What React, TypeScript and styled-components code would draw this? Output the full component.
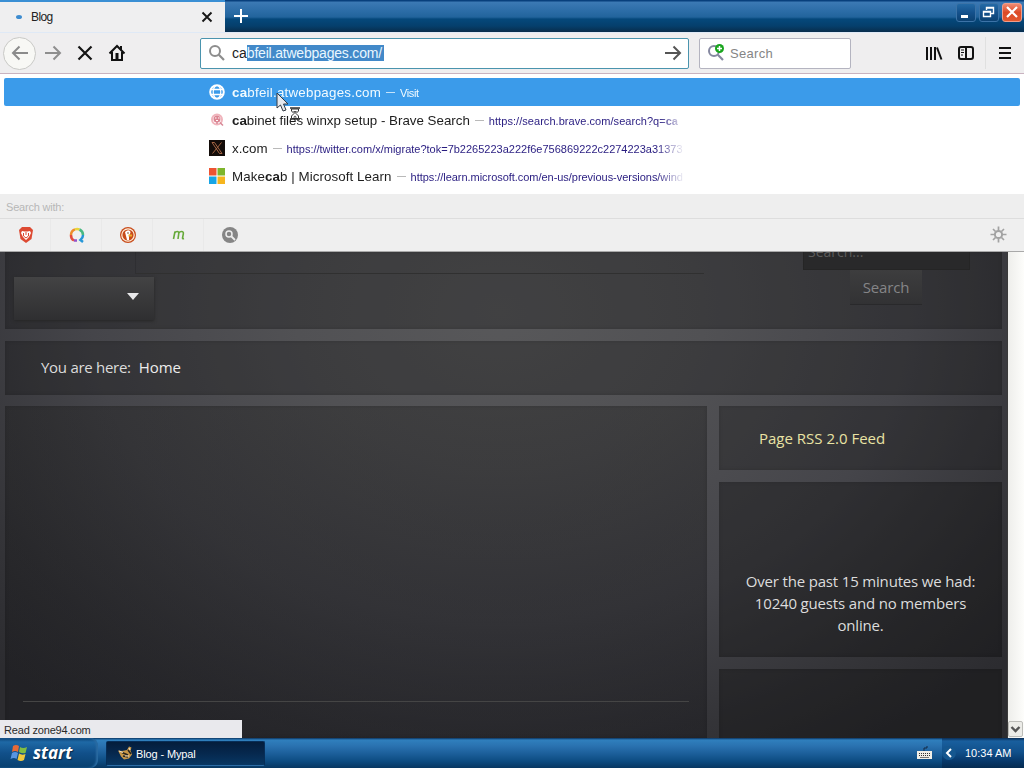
import React from "react";
import styled, { createGlobalStyle } from "styled-components";

const GlobalStyle = createGlobalStyle`
  * {
    box-sizing: border-box;
  }

  body {
    margin: 0;
    overflow: hidden;
    font-family: "Liberation Sans", Arial, sans-serif;
  }
`;

const Screen = styled.div`
  position: relative;
  width: 1024px;
  height: 768px;
  display: flex;
  flex-direction: column;
  overflow: hidden;
  background: #2b2b2c;
`;

const Label = styled.span<{ size?: number; spacing?: number; color?: string }>`
  font-size: ${p => p.size || 13}px;
  letter-spacing: ${p => p.spacing || 0}px;
  color: ${p => p.color || "inherit"};
  white-space: pre;
`;

/* window frame */

const TitleBar = styled.div`
  height: 32px;
  flex: none;
  display: flex;
  background: linear-gradient(
    #083f7c 0,
    #083f7c 1px,
    #3c79b4 2px,
    #2a6ba5 12px,
    #22649c 17px,
    #05487b 19px,
    #053f6c 26px,
    #082d4c 32px
  );
`;

const Tab = styled.div`
  width: 225px;
  height: 32px;
  display: flex;
  align-items: center;
  padding: 0 10px 0 16px;
  background: #efeff0;
  border-top: 2px solid #3a8fd4;
`;

const LoadingDot = styled.div`
  width: 6px;
  height: 4px;
  margin-right: 9px;
  border-radius: 50%;
  background: #3d8cd0;
`;

const TabTitle = styled(Label)`
  flex: 1;
`;

const NewTab = styled.div`
  flex: 1;
  padding: 8px 0 0 8px;
`;

const WindowButtons = styled.div`
  display: flex;
  gap: 3px;
  padding: 3px 2px 0 0;
`;

const WindowButton = styled.div<{ danger?: boolean }>`
  width: 20px;
  height: 19px;
  border-radius: 3px;
  border: 1px solid ${p => (p.danger ? "#ef9d8a" : "#3c73a7")};
  background: ${p =>
    p.danger
      ? "linear-gradient(#f08a72, #dc4a26 50%, #e2582f)"
      : "linear-gradient(#246aa6, #14518c 50%, #0c4273)"};

  svg {
    display: block;
  }
`;

const NavBar = styled.div`
  height: 42px;
  flex: none;
  display: flex;
  align-items: center;
  background: #efeeef;
  border-top: 1px solid #dfe9f6;
  border-bottom: 1px solid #c9b3c0;
`;

const BackButton = styled.div`
  width: 33px;
  height: 33px;
  margin-left: 3px;
  border-radius: 50%;
  border: 1px solid #c9c9c6;
  background: #f8f8f5;
  display: flex;
  align-items: center;
  justify-content: center;
`;

const NavIcons = styled.div`
  display: flex;
  gap: 14px;
  margin-left: 8px;
  flex: 1;
`;

const Field = styled.div<{ width: number; focused?: boolean }>`
  width: ${p => p.width}px;
  height: 31px;
  display: flex;
  align-items: center;
  padding: 0 6px 0 7px;
  background: #fff;
  border: 1px solid ${p => (p.focused ? "#4a94ae" : "#b4b4c0")};
  border-radius: 2px;
`;

const Address = styled.div`
  flex: 1;
  padding-left: 6px;
  font-size: 14px;
  line-height: 16px;
  color: #222;
  white-space: nowrap;
`;

const Selection = styled.span`
  display: inline-block;
  width: 137px;
  letter-spacing: -0.2px;
  background: #4289c9;
  color: #e9f7ff;
`;

const SearchField = styled(Field)`
  margin-left: 10px;
  gap: 5px;
`;

const Tools = styled.div`
  display: flex;
  align-items: center;
  gap: 14px;
  margin-left: 74px;
  padding-right: 10px;
`;

const ToolSeparator = styled.div`
  width: 1px;
  height: 32px;
  margin: 0 -4px;
  background: #e0e0e0;
`;

/* address suggestions */

const Suggestions = styled.div`
  height: 120px;
  flex: none;
  padding: 4px 4px 0;
  background: #fff;
`;

const SuggestionRow = styled.div<{ active?: boolean }>`
  height: 28px;
  display: flex;
  align-items: center;
  padding-left: 205px;
  border-radius: 2px;
  color: ${p => (p.active ? "#f2fbff" : "#1d1d1d")};
  background: ${p => (p.active ? "#3b9bea" : "transparent")};
`;

const SuggestionText = styled.div`
  width: 455px;
  margin-left: 7px;
  overflow: hidden;
  white-space: nowrap;
  mask-image: linear-gradient(to right, #000 425px, transparent 453px);
`;

const Dash = styled.span<{ active?: boolean }>`
  display: inline-block;
  width: 9px;
  height: 1px;
  margin: 0 5px;
  vertical-align: 4px;
  background: ${p => (p.active ? "#c5e3fa" : "#b9b9b9")};
`;

const SearchWith = styled.div`
  height: 25px;
  flex: none;
  padding: 5px 6px;
  line-height: 14px;
  background: #eeeeee;
  border-bottom: 1px solid #dddddd;
`;

const Engines = styled.div`
  height: 33px;
  flex: none;
  display: flex;
  background: #efefef;
  border-bottom: 1px solid #a9a9a9;
`;

const Engine = styled.div`
  width: 51px;
  display: flex;
  align-items: center;
  justify-content: center;
  padding-left: 2px;
  border-right: 1px solid #e9e9e9;

  &:nth-child(5) {
    padding-left: 1px;
    border-right: none;
  }
`;

const EngineSettings = styled.div`
  margin-left: auto;
  padding: 7px 17px 0 0;
`;

/* page */

const Viewport = styled.div`
  position: relative;
  height: 486px;
  flex: none;
  display: flex;
`;

const Page = styled.div`
  width: 1008px;
  height: 486px;
  padding: 0 5px;
  overflow: hidden;
  font-family: "Open Sans", "Noto Sans", sans-serif;
  font-size: 15px;
  color: #dcdcdc;
  border-right: 1px solid #3a3a3a;
  background: radial-gradient(
    ellipse 680px 520px at 500px 60px,
    #58585a 0%,
    #515154 30%,
    #45454a 60%,
    #343438 85%,
    #2c2c30 100%
  );
`;

const Panel = styled.div<{ height: number }>`
  height: ${p => p.height}px;
  flex: none;
  background: rgba(14, 14, 12, 0.3);
  box-shadow: inset 0 0 4px rgba(0, 0, 0, 0.14);
`;

const Header = styled(Panel)`
  display: flex;
  justify-content: space-between;
`;

const HeaderLeft = styled.div`
  width: 699px;
`;

const HeaderStrip = styled.div`
  height: 22px;
  margin-left: 130px;
  border-bottom: 1px solid #303030;
  border-left: 1px solid rgba(0, 0, 0, 0.12);
`;

const MenuBox = styled.div`
  width: 140px;
  height: 43px;
  margin: 3px 0 0 9px;
  padding: 16px 15px 0 0;
  background: linear-gradient(#434344, #2f2f31);
  box-shadow: 0 1px 3px #262626;

  svg {
    display: block;
    margin-left: auto;
  }
`;

const HeaderSearch = styled.div`
  width: 199px;
`;

const SearchInput = styled.div`
  width: 167px;
  height: 18px;
  padding-left: 4px;
  overflow: hidden;
  font-size: 14px;
  line-height: 0;
  color: #5c5c5c;
  background: #29292a;
  border: 1px solid #252525;
  border-top: none;
`;

const SearchButton = styled.div`
  width: 72px;
  height: 35px;
  margin-left: 47px;
  line-height: 34px;
  text-align: center;
  letter-spacing: -0.15px;
  color: #858587;
  background: linear-gradient(#3d3d3e, #323234);
  border-bottom: 1px solid #29292b;
`;

const Breadcrumb = styled(Panel)`
  display: flex;
  align-items: center;
  gap: 8px;
  margin: 12px 0 11px;
  padding: 0 0 2px 36px;
  letter-spacing: -0.28px;
`;

const Home = styled.span`
  color: #ececec;
  letter-spacing: -0.1px;
`;

const Columns = styled.div`
  display: flex;
  gap: 12px;
`;

const Main = styled(Panel)`
  width: 702px;
  padding: 295px 18px 0;
  background: linear-gradient(rgba(14, 14, 12, 0.3), rgba(20, 20, 24, 0.42));
`;

const Rule = styled.div`
  height: 1px;
  background: #454545;
`;

const Side = styled.div`
  width: 283px;
  display: flex;
  flex-direction: column;
  gap: 12px;
`;

const Feed = styled(Panel)`
  padding-left: 40px;
  line-height: 64px;
  color: #e9e3a4;
`;

const Visitors = styled(Panel)`
  padding: 88px 20px 0;
  text-align: center;
  line-height: 22px;
  letter-spacing: -0.17px;
  background: rgba(14, 14, 14, 0.38);
`;

const ScrollBar = styled.div`
  width: 16px;
  display: flex;
  align-items: flex-end;
  background: linear-gradient(to right, #eeeeeb, #fdfdfb);
`;

const ScrollButton = styled.div`
  width: 15px;
  height: 16px;
  margin: 0 0 1px 0;
  border: 1px solid #bcbcb8;
  border-radius: 2px;
  background: #ecece8;

  svg {
    display: block;
  }
`;

const StatusTip = styled.div`
  position: absolute;
  left: 0;
  bottom: 0;
  width: 242px;
  height: 18px;
  padding-left: 4px;
  line-height: 17px;
  background: #e9e9ed;
  color: #2a2a2a;
`;

const Pointer = styled.svg`
  position: absolute;
  left: 276px;
  top: 92px;
`;

/* taskbar */

const Taskbar = styled.div`
  height: 30px;
  flex: none;
  display: flex;
  color: #fff;
  background: linear-gradient(
    #0a3460 0,
    #2f7fbd 2px,
    #2a72b0 8px,
    #1d609c 15px,
    #0d4c82 23px,
    #073762 30px
  );
`;

const StartButton = styled.div`
  width: 98px;
  display: flex;
  align-items: center;
  gap: 4px;
  padding-left: 10px;
  border-radius: 0 8px 8px 0;
  background: linear-gradient(#0d4274, #1e69a6 4px, #11508a 15px, #08406f 30px);
  box-shadow: inset -2px 0 2px #2a6ba2;
`;

const StartText = styled.span`
  font-family: "Open Sans", sans-serif;
  font-size: 17px;
  font-weight: 700;
  font-style: italic;
  line-height: 20px;
  text-shadow: 1px 1px 1px #04294b;
`;

const TaskButton = styled.div`
  width: 159px;
  height: 25px;
  margin: 3px 0 0 8px;
  padding-left: 11px;
  display: flex;
  align-items: center;
  gap: 3px;
  border: 1px solid #072e58;
  border-bottom-color: #2d6da6;
  border-radius: 2px;
  background: linear-gradient(#041d3c, #06284e 50%, #083763);
`;

const TrayIcon = styled.div`
  margin: 7px 10px 0 auto;
`;

const Tray = styled.div`
  width: 82px;
  display: flex;
  align-items: center;
  gap: 9px;
  background: linear-gradient(
    #0a2d56 0,
    #195f9e 3px,
    #11508b 14px,
    #07386a 23px,
    #052b50 30px
  );
`;

function Magnifier({ plus }: { plus?: boolean }) {
  return (
    <svg width="18" height="18" viewBox="0 0 18 18" fill="none">
      <circle cx="7" cy="7" r="5" stroke={plus ? "#8588a0" : "#8d8d8d"} strokeWidth="2" />
      <path d="M10.8 10.8L16 16" stroke={plus ? "#8588a0" : "#8d8d8d"} strokeWidth="2.2" />
      {plus && (
        <>
          <circle cx="12.5" cy="4.500" r="4.500" fill="#19a51d" />
          <path d="M12.5 2v5M10 4.500h5" stroke="#fff" strokeWidth="1.500" />
        </>
      )}
    </svg>
  );
}

function Arrow({ color, flip }: { color: string; flip?: boolean }) {
  return (
    <svg width="18" height="18" viewBox="0 0 18 18" fill="none">
      <path
        d={flip ? "M17 9H2M8.500 2.500L2 9l6.500 6.500" : "M1 9h15M9.500 2.500L16 9l-6.500 6.500"}
        stroke={color}
        strokeWidth="2"
      />
    </svg>
  );
}

function Chrome() {
  return (
    <>
      <TitleBar>
        <Tab>
          <LoadingDot />
          <TabTitle size={12} spacing={-0.6} color="#222">
            Blog
          </TabTitle>
          <svg width="16" height="14" viewBox="0 0 16 14">
            <path d="M3.500 2.500l9 9M12.500 2.500l-9 9" stroke="#171717" strokeWidth="1.900" />
          </svg>
        </Tab>
        <NewTab>
          <svg width="16" height="16" viewBox="0 0 16 16">
            <path d="M8 1v14M1 8h14" stroke="#fff" strokeWidth="2" />
          </svg>
        </NewTab>
        <WindowButtons>
          <WindowButton>
            <svg width="18" height="17">
              <path d="M4 12.500h7" stroke="#fff" strokeWidth="3" />
            </svg>
          </WindowButton>
          <WindowButton>
            <svg width="18" height="17" fill="none" stroke="#fff">
              <path d="M6.500 6V3.500h7v6H11M6 4h8" strokeWidth="1.400" />
              <path d="M3.500 7.500h7v5h-7zM3 8h8" strokeWidth="1.400" />
            </svg>
          </WindowButton>
          <WindowButton danger>
            <svg width="18" height="17">
              <path d="M4 3l10 10M14 3L4 13" stroke="#fff" strokeWidth="2.200" />
            </svg>
          </WindowButton>
        </WindowButtons>
      </TitleBar>
      <NavBar>
        <BackButton>
          <Arrow color="#8b8b8b" flip />
        </BackButton>
        <NavIcons>
          <Arrow color="#8e8e8e" />
          <svg width="18" height="18" viewBox="0 0 18 18">
            <path d="M2.500 2.500l13 13M15.500 2.500l-13 13" stroke="#151515" strokeWidth="2.200" />
          </svg>
          <svg width="18" height="18" viewBox="0 0 18 18" fill="none" stroke="#111">
            <path d="M1.500 9.500L9 2l7.500 7.500" strokeWidth="2" />
            <path d="M4 8v8h10V8M13 2v4" strokeWidth="2" />
            <path d="M9 9v6" strokeWidth="3" />
          </svg>
        </NavIcons>
        <Field width={489} focused>
          <Magnifier />
          <Address>
            ca<Selection>bfeil.atwebpages.com/</Selection>
          </Address>
          <Arrow color="#555" />
        </Field>
        <SearchField width={152}>
          <Magnifier plus />
          <Label size={13} spacing={0.3} color="#858585">
            Search
          </Label>
        </SearchField>
        <Tools>
          <svg width="18" height="18" viewBox="0 0 18 18" stroke="#111">
            <path d="M2 3v13M6 3v13M10 3v13" strokeWidth="2" />
            <path d="M12 3.500l4.500 12" strokeWidth="2" />
          </svg>
          <svg width="18" height="18" viewBox="0 0 18 18" fill="none" stroke="#111">
            <rect x="2" y="3" width="14" height="12" rx="2" strokeWidth="2" />
            <path d="M9 3v12" strokeWidth="2" />
            <path d="M4 6h3M4 8.500h3M4 11h2" strokeWidth="1" />
          </svg>
          <ToolSeparator />
          <svg width="18" height="18" viewBox="0 0 18 18" stroke="#111">
            <path d="M3 4h12M3 9h12M3 14h12" strokeWidth="2" />
          </svg>
        </Tools>
      </NavBar>
    </>
  );
}

function SuggestionList() {
  return (
    <Suggestions>
      <SuggestionRow active>
        <svg width="16" height="16" viewBox="0 0 16 16" fill="none" stroke="#fff">
          <circle cx="8" cy="8" r="6.800" strokeWidth="2" />
          <path d="M2 5.500h12M2 10.500h12" strokeWidth="1.300" />
          <ellipse cx="8" cy="8" rx="3.800" ry="6.500" strokeWidth="1.200" />
        </svg>
        <SuggestionText>
          <Label size={13.33} spacing={0.24}>
            <b>ca</b>bfeil.atwebpages.com
          </Label>
          <Dash active />
          <Label size={11} spacing={-0.4}>
            Visit
          </Label>
        </SuggestionText>
      </SuggestionRow>
      <SuggestionRow>
        <svg width="16" height="16" viewBox="0 0 16 16" fill="none">
          <circle cx="8" cy="7.500" r="5" stroke="#f0b4bc" strokeWidth="2" />
          <circle cx="8" cy="7" r="3.500" fill="#dc8592" />
          <path d="M8 8v4M11 10.500l3 3" stroke="#d78997" strokeWidth="1.500" />
          <path d="M6 6h1.500M9 6h1.500M7 8.500h2" stroke="#fff" />
        </svg>
        <SuggestionText>
          <Label size={13.33}>
            <b>ca</b>binet files winxp setup - Brave Search
          </Label>
          <Dash />
          <Label size={11} spacing={0.05} color="#281c80">
            https://search.brave.com/search?q=<b>ca</b>
          </Label>
        </SuggestionText>
      </SuggestionRow>
      <SuggestionRow>
        <svg width="16" height="16" viewBox="0 0 16 16">
          <rect width="16" height="16" fill="#130c09" />
          <path d="M3 2.500h2.500l7.500 11h-2.500zM12.500 2.500L3.500 13.500" fill="none" stroke="#a36443" />
        </svg>
        <SuggestionText>
          <Label size={13.33}>x.com</Label>
          <Dash />
          <Label size={11} color="#281c80">
            https://twitter.com/x/migrate?tok=7b2265223a222f6e756869222c2274223a31373
          </Label>
        </SuggestionText>
      </SuggestionRow>
      <SuggestionRow>
        <svg width="16" height="16" viewBox="0 0 16 16">
          <path d="M0 0h7.500v7.500H0z" fill="#ed5332" />
          <path d="M8.500 0H16v7.500H8.500z" fill="#7eb52c" />
          <path d="M0 8.500h7.500V16H0z" fill="#18a5e5" />
          <path d="M8.500 8.500H16V16H8.500z" fill="#f6b51e" />
        </svg>
        <SuggestionText>
          <Label size={13.33} spacing={0.08}>
            Make<b>ca</b>b | Microsoft Learn
          </Label>
          <Dash />
          <Label size={11} spacing={-0.04} color="#281c80">
            https://learn.microsoft.com/en-us/previous-versions/wind
          </Label>
        </SuggestionText>
      </SuggestionRow>
    </Suggestions>
  );
}

function EngineBar() {
  return (
    <>
      <SearchWith>
        <Label size={11} spacing={-0.2} color="#b7b7b7">
          Search with:
        </Label>
      </SearchWith>
      <Engines>
        <Engine>
          <svg width="16" height="16" viewBox="0 0 16 16">
            <path d="M4 0h8l3 3-1.500 9L8 16l-5.500-4L1 3z" fill="#dd4a32" />
            <path d="M4 4l2.500.5h3L12 4l1 2-2 4-3 3-3-3-2-4z" fill="#fff" />
            <path d="M5.500 6v3l2.500 2 2.500-2V6M8 5v3" stroke="#dd4a32" fill="none" />
          </svg>
        </Engine>
        <Engine>
          <svg width="16" height="16" viewBox="0 0 16 16" fill="none" strokeWidth="2.500">
            <path d="M5 13.500A6 6 0 012 8" stroke="#e34b3e" />
            <path d="M2 8a6 6 0 014-5.600" stroke="#ee8c2b" />
            <path d="M6 2.400a6 6 0 014.500.1" stroke="#e9d53b" />
            <path d="M10.500 2.500A6 6 0 0114 8" stroke="#49b982" />
            <path d="M14 8q0 3-2.500 5l2.500 2" stroke="#2697d8" />
            <path d="M5 13.500h3" stroke="#9554c9" />
          </svg>
        </Engine>
        <Engine>
          <svg width="16" height="16" viewBox="0 0 16 16">
            <circle cx="8" cy="8" r="8" fill="#c84c1b" />
            <circle cx="8" cy="8" r="6.200" fill="none" stroke="#fff0dd" strokeWidth="1.200" />
            <path d="M5 5q3-3 5-1 1 1 0 3L9 9v4H7z" fill="#fff" />
            <path d="M8.500 7.500h3.500v2H8.500z" fill="#f4ae28" />
            <circle cx="8" cy="6" r=".8" fill="#734126" />
          </svg>
        </Engine>
        <Engine>
          <svg width="16" height="16" viewBox="0 0 16 16" fill="none">
            <path
              d="M2.500 12L4 4.500M3.700 6q1-1.500 2.500-1.500 2 0 1.500 2.500L7 12M7.800 6q1-1.500 2.700-1.500 2.300 0 1.800 2.500L11.500 11q0 1 1.500.5"
              stroke="#67aa3b"
              strokeWidth="1.600"
            />
          </svg>
        </Engine>
        <Engine>
          <svg width="16" height="16" viewBox="0 0 16 16" fill="none">
            <circle cx="8" cy="8" r="8" fill="#858585" />
            <circle cx="7" cy="7" r="3" stroke="#eee" strokeWidth="1.500" />
            <path d="M9.500 9.500l3.500 3.500" stroke="#eee" strokeWidth="1.800" />
          </svg>
        </Engine>
        <EngineSettings>
          <svg width="17" height="17" viewBox="0 0 17 17" fill="none" stroke="#a2a2a2">
            <circle cx="8.500" cy="8.500" r="3.600" strokeWidth="2" />
            <path
              d="M8.500 .5v4M8.500 12.500v4M.5 8.500h4M12.500 8.500h4M3 3l2.500 2.500M11.500 11.500L14 14M3 14l2.500-2.500M11.500 5.500L14 3"
              strokeWidth="1.700"
            />
          </svg>
        </EngineSettings>
      </Engines>
    </>
  );
}

function BlogPage() {
  return (
    <Viewport>
      <Page>
        <Header height={77}>
          <HeaderLeft>
            <HeaderStrip />
            <MenuBox>
              <svg width="12" height="7">
                <path d="M0 0h12L6 7z" fill="#e8e8ea" />
              </svg>
            </MenuBox>
          </HeaderLeft>
          <HeaderSearch>
            <SearchInput>Search...</SearchInput>
            <SearchButton>Search</SearchButton>
          </HeaderSearch>
        </Header>
        <Breadcrumb height={54}>
          <span>You are here:</span>
          <Home>Home</Home>
        </Breadcrumb>
        <Columns>
          <Main height={332}>
            <Rule />
          </Main>
          <Side>
            <Feed height={64}>Page RSS 2.0 Feed</Feed>
            <Visitors height={175}>
              Over the past 15 minutes we had: 10240 guests and no members online.
            </Visitors>
            <Visitors height={69} />
          </Side>
        </Columns>
      </Page>
      <ScrollBar>
        <ScrollButton>
          <svg width="13" height="14">
            <path d="M2.500 5l4 4 4-4" fill="none" stroke="#555" strokeWidth="2.400" />
          </svg>
        </ScrollButton>
      </ScrollBar>
      <StatusTip>
        <Label size={11} spacing={-0.18}>
          Read zone94.com
        </Label>
      </StatusTip>
    </Viewport>
  );
}

function DesktopBar() {
  return (
    <Taskbar>
      <StartButton>
        <svg width="19" height="18" viewBox="0 0 19 18">
          <path d="M3 2q3-2 6 0L8 8Q5 6 2 8z" fill="#e86a36" />
          <path d="M10 3q3 2 7 0l-1.500 6Q12 10 9 8z" fill="#82bd42" />
          <path d="M2 9q3-2 6 0l-1.500 6Q4 13 .5 15z" fill="#5895e0" />
          <path d="M9 9.500q3 2 6.500.5L14 16q-3 2-6.500 0z" fill="#f2c83d" />
        </svg>
        <StartText>start</StartText>
      </StartButton>
      <TaskButton>
        <svg width="15" height="15" viewBox="0 0 15 15">
          <path d="M0 4.500l4 .5 5-1 2-3.500 2.500 1-1 3 1.500 4-3 4-5 1-3-3z" fill="#c89747" />
          <path d="M4 6.500l6 2.500M5 10l5 1M10 4l3 4" stroke="#29251d" strokeWidth="1.500" />
          <path d="M1 5l4 1.500M7 10h4M11 2l1 2" stroke="#eee1c6" />
        </svg>
        <Label size={11} spacing={-0.13}>
          Blog - Mypal
        </Label>
      </TaskButton>
      <TrayIcon>
        <svg width="15" height="13" viewBox="0 0 15 13">
          <path d="M7 5V2h3V0" fill="none" stroke="#142a46" />
          <rect y="5" width="15" height="8" fill="#f1eee6" />
          <path d="M2 7.500h11M2 9.500h11" stroke="#333" strokeDasharray="1 1" />
          <path d="M3 11.500h9" stroke="#777" />
        </svg>
      </TrayIcon>
      <Tray>
        <svg width="14" height="16" viewBox="0 0 14 16">
          <circle cx="7" cy="8" r="7" fill="#15578f" />
          <path d="M9 4L5 8l4 4" fill="none" stroke="#fff" strokeWidth="2" />
        </svg>
        <Label size={11}>10:34 AM</Label>
      </Tray>
    </Taskbar>
  );
}

export default function App() {
  return (
    <Screen>
      <GlobalStyle />
      <Chrome />
      <SuggestionList />
      <EngineBar />
      <BlogPage />
      <DesktopBar />
      <Pointer width="26" height="30" viewBox="0 0 26 30">
        <path d="M1 1v15l3.500-3L7 19l3-1-2.500-6H12z" fill="#e6e9ee" stroke="#343b43" />
        <path d="M14 16h10M14 27h10" stroke="#333" strokeWidth="1.500" />
        <path d="M15.500 17v2L18 21.500 15.500 24v2.500h7V24L20 21.500l2.500-2.500v-2z" fill="#fff" stroke="#333" />
        <path d="M17 19h4l-2 2.500zM17 25.500l2-2 2 2z" fill="#555" />
      </Pointer>
    </Screen>
  );
}
